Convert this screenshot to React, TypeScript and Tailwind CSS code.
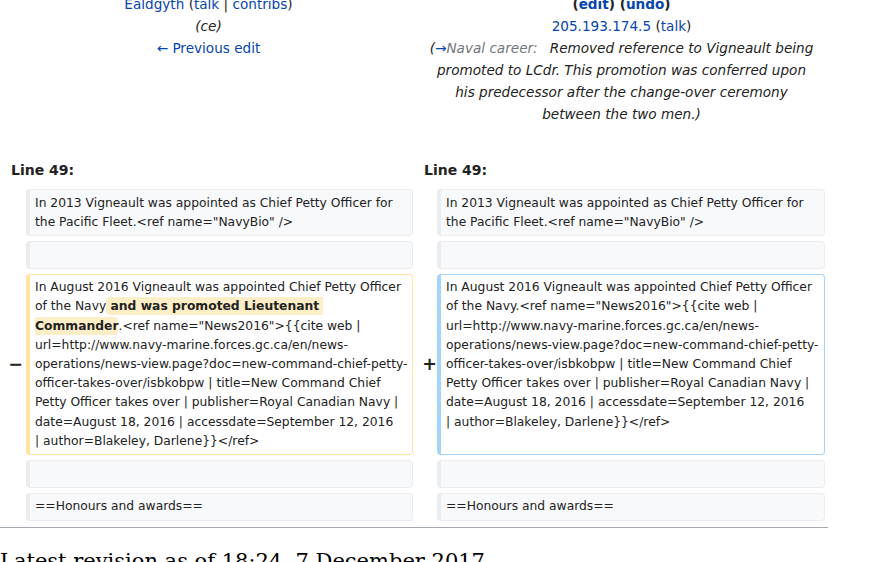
import React from "react";

const link = "text-[#0645ad]";

type Kind = "context" | "del" | "add";

const boxStyle: Record<Kind, string> = {
  context: "bg-[#f8f9fa] border-[#eaecf0]",
  del: "bg-white border-[#ffe49c]",
  add: "bg-white border-[#a3d3ff]",
};

const Cell = ({ kind, children }: { kind: Kind; children: React.ReactNode }) => (
  <div
    className={`${boxStyle[kind]} border border-l-4 rounded-[4px] px-[5px] py-[3.5px] text-[12.32px] leading-[19.2px] whitespace-pre text-[#222]`}
  >
    {children}
  </div>
);

const Lines = ({ lines }: { lines: string[] }) => (
  <>
    {lines.map((l, i) => (
      <div key={i}>{l}</div>
    ))}
  </>
);

const Empty = () => <div>{"\u00a0"}</div>;

const Marker = ({ sign, pad }: { sign?: string; pad: string }) => (
  <div
    className={`flex items-center justify-end ${pad} text-[17.5px] font-bold leading-[21px] text-[#222]`}
  >
    {sign}
  </div>
);

const firstLines = [
  "In 2013 Vigneault was appointed as Chief Petty Officer for",
  'the Pacific Fleet.<ref name="NavyBio" />',
];

const sharedTail = [
  "url=http://www.navy-marine.forces.gc.ca/en/news-",
  "operations/news-view.page?doc=new-command-chief-petty-",
  "officer-takes-over/isbkobpw | title=New Command Chief",
  "Petty Officer takes over | publisher=Royal Canadian Navy |",
  "date=August 18, 2016 | accessdate=September 12, 2016",
  "| author=Blakeley, Darlene}}</ref>",
];

export default function App() {
  return (
    <div className="h-[562px] overflow-hidden bg-white font-['DejaVu_Sans',sans-serif] text-[#222]">
      <div className="w-[828px] -mt-[7px]">
        {/* revision headers */}
        <div className="grid grid-cols-[417px_409px] text-[13.6px] leading-[22px] text-center">
          <div>
            <div>
              <span className={link}>Ealdgyth</span> (<span className={link}>talk</span> |{" "}
              <span className={link}>contribs</span>)
            </div>
            <div className="italic">(ce)</div>
            <div className={link}>← Previous edit</div>
          </div>
          <div>
            <div className="font-bold">
              (<span className={link}>edit</span>) (<span className={link}>undo</span>)
            </div>
            <div>
              <span className={link}>205.193.174.5</span> (<span className={link}>talk</span>)
            </div>
            <div className="italic">
              (<span className={link}>→</span>
              <span className="text-[#72777d] mr-[12px]">Naval career:</span>Removed reference to
              Vigneault being
              <br />
              promoted to LCdr. This promotion was conferred upon
              <br />
              his predecessor after the change-over ceremony
              <br />
              between the two men.)
            </div>
          </div>
        </div>

        {/* line numbers */}
        <div className="mt-[34px] grid grid-cols-[413px_415px] text-[14px] leading-[22px] font-bold">
          <div className="pl-[11px]">Line 49:</div>
          <div className="pl-[11px]">Line 49:</div>
        </div>

        {/* diff rows */}
        <div className="mt-[8px] grid grid-cols-[26px_387px_24px_388px] gap-y-[4.5px]">
          <Marker pad="pr-[3px]" />
          <Cell kind="context">
            <Lines lines={firstLines} />
          </Cell>
          <Marker pad="pr-0" />
          <Cell kind="context">
            <Lines lines={firstLines} />
          </Cell>

          <Marker pad="pr-[3px]" />
          <Cell kind="context">
            <Empty />
          </Cell>
          <Marker pad="pr-0" />
          <Cell kind="context">
            <Empty />
          </Cell>

          <Marker sign="−" pad="pr-[3px]" />
          <Cell kind="del">
            <div>In August 2016 Vigneault was appointed Chief Petty Officer</div>
            <div>
              of the Navy
              <span className="bg-[#feeec8] font-bold rounded-l-[4px] py-[2px]">
                {" and was promoted Lieutenant "}
              </span>
            </div>
            <div>
              <span className="bg-[#feeec8] font-bold rounded-r-[4px] py-[2px]">Commander</span>
              {'.<ref name="News2016">{{cite web |'}
            </div>
            <Lines lines={sharedTail} />
          </Cell>
          <Marker sign="+" pad="pr-0" />
          <Cell kind="add">
            <div>In August 2016 Vigneault was appointed Chief Petty Officer</div>
            <div>{'of the Navy.<ref name="News2016">{{cite web |'}</div>
            <Lines lines={sharedTail} />
          </Cell>

          <Marker pad="pr-[3px]" />
          <Cell kind="context">
            <Empty />
          </Cell>
          <Marker pad="pr-0" />
          <Cell kind="context">
            <Empty />
          </Cell>

          <Marker pad="pr-[3px]" />
          <Cell kind="context">
            <div>==Honours and awards==</div>
          </Cell>
          <Marker pad="pr-0" />
          <Cell kind="context">
            <div>==Honours and awards==</div>
          </Cell>
        </div>

        <div className="mt-[6.5px] h-px bg-[#a2a9b1]" />

        <h2 className="mt-[23px] font-['DejaVu_Serif',serif] text-[21px] leading-none text-black whitespace-nowrap">
          Latest revision as of 18:24, 7 December 2017
        </h2>
      </div>
    </div>
  );
}
